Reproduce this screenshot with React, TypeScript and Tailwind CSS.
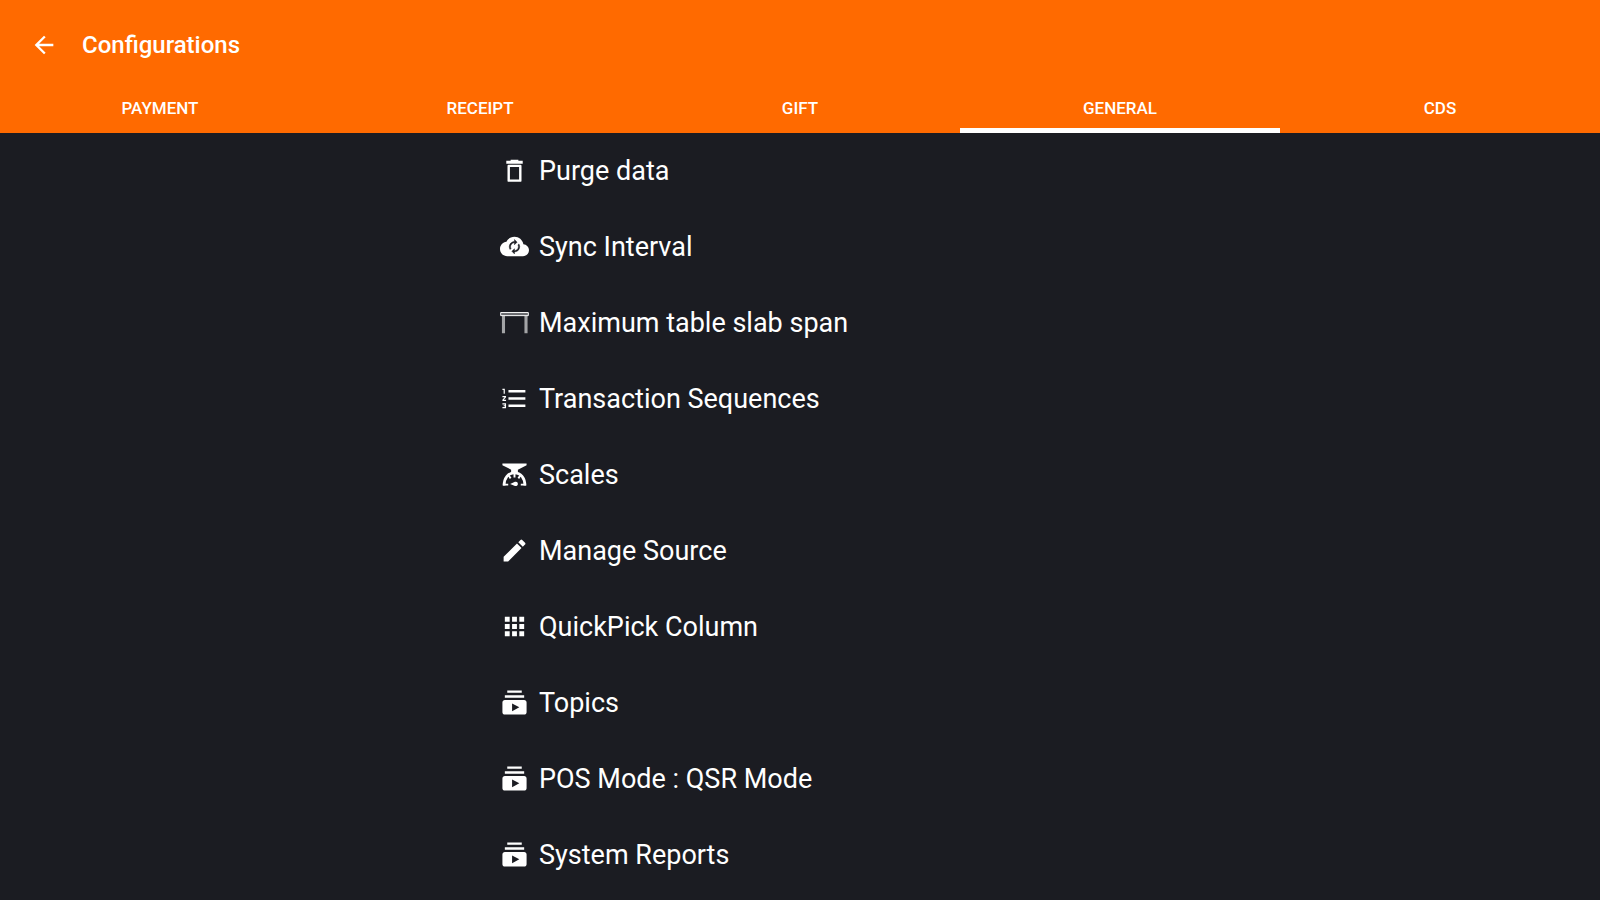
import { useState } from 'react'
import type { ComponentType } from 'react'
import {
  MdApps,
  MdArrowBack,
  MdEdit,
  MdFormatListNumbered,
  MdSubscriptions,
} from 'react-icons/md'
import { clsx } from 'clsx'

type IconProps = { className?: string }

const TABS = ['Payment', 'Receipt', 'Gift', 'General', 'CDS']

function TrashIcon({ className }: IconProps) {
  return (
    <svg viewBox="0 0 30 30" className={className} aria-hidden="true">
      <path fill="currentColor" d="M11 4h8v1h4.5v3h-17V5H11z" />
      <path
        fill="none"
        stroke="currentColor"
        strokeWidth="2.5"
        strokeLinejoin="round"
        d="M9 10.2h12v15.3H9z"
      />
    </svg>
  )
}

function CloudSyncIcon({ className }: IconProps) {
  return (
    <svg viewBox="0 0 24 24" className={className} aria-hidden="true">
      <path
        fill="currentColor"
        d="M19.35 10.04C18.67 6.59 15.64 4 12 4 9.11 4 6.6 5.64 5.35 8.04 2.34 8.36 0 10.91 0 14c0 3.31 2.69 6 6 6h13c2.76 0 5-2.24 5-5 0-2.64-2.05-4.78-4.65-4.96z"
      />
      <path
        fill="#1b1c22"
        stroke="#1b1c22"
        strokeWidth="0.7"
        transform="translate(5.5 5.7) scale(0.54)"
        d="M12 6v3l4-4-4-4v3c-4.42 0-8 3.58-8 8 0 1.57.46 3.03 1.24 4.26L6.7 14.8c-.45-.83-.7-1.79-.7-2.8 0-3.31 2.69-6 6-6zm6.76 1.74L17.3 9.2c.44.84.7 1.79.7 2.8 0 3.31-2.69 6-6 6v-3l-4 4 4 4v-3c4.42 0 8-3.58 8-8 0-1.57-.46-3.03-1.24-4.26z"
      />
    </svg>
  )
}

function TableIcon({ className }: IconProps) {
  return (
    <svg viewBox="0 0 30 30" className={className} aria-hidden="true">
      <path
        fill="currentColor"
        fillOpacity="0.6"
        d="M2 8h3.2v18H2zM25.3 8h3.2v18h-3.2z"
      />
      <path
        fill="currentColor"
        fillOpacity="0.35"
        stroke="currentColor"
        d="M.7 4.7h28.6v3.2H.7z"
      />
    </svg>
  )
}

function ScaleIcon({ className }: IconProps) {
  return (
    <svg viewBox="0 0 30 30" className={className} aria-hidden="true">
      <path fill="currentColor" d="M2.5 3.5h25v2l-9 4.5v3h-7v-3l-9-4.5z" />
      <path
        fill="none"
        stroke="currentColor"
        strokeWidth="2.8"
        d="M4.2 26.5C4.2 18.5 8.5 13.3 15 13.3s10.8 5.2 10.8 13.2"
      />
      <path
        stroke="currentColor"
        strokeWidth="2"
        d="M15 13v5M9 16l2 3M21 16l-2 3M3 25.5h5.5M21.5 25.5H27"
      />
      <path fill="currentColor" d="M10.5 24.7l5-2.2a2.3 2.3 0 1 1 0 4.4z" />
    </svg>
  )
}

const ITEMS: { label: string; icon: ComponentType<IconProps> }[] = [
  { label: 'Purge data', icon: TrashIcon },
  { label: 'Sync Interval', icon: CloudSyncIcon },
  { label: 'Maximum table slab span', icon: TableIcon },
  { label: 'Transaction Sequences', icon: MdFormatListNumbered },
  { label: 'Scales', icon: ScaleIcon },
  { label: 'Manage Source', icon: MdEdit },
  { label: 'QuickPick Column', icon: MdApps },
  { label: 'Topics', icon: MdSubscriptions },
  { label: 'POS Mode : QSR Mode', icon: MdSubscriptions },
  { label: 'System Reports', icon: MdSubscriptions },
]

export default function App() {
  const [activeTab, setActiveTab] = useState('General')

  return (
    <div className="min-h-screen bg-[#1b1c22] font-[Roboto,sans-serif] text-white">
      <header className="bg-[#ff6a00]">
        <div className="flex h-[90px] items-center gap-6 px-[30px]">
          <button type="button" aria-label="Back">
            <MdArrowBack className="size-7" />
          </button>
          <h1 className="text-2xl font-medium">Configurations</h1>
        </div>
        <nav className="grid grid-cols-5">
          {TABS.map((tab) => (
            <button
              key={tab}
              type="button"
              onClick={() => setActiveTab(tab)}
              className={clsx(
                'h-[43px] border-b-5 text-[17px] font-medium uppercase',
                tab === activeTab ? 'border-white' : 'border-transparent',
              )}
            >
              {tab}
            </button>
          ))}
        </nav>
      </header>

      <main className="mx-auto w-3/8">
        <ul>
          {ITEMS.map(({ label, icon: Icon }) => (
            <li key={label}>
              <button
                type="button"
                className="flex h-19 w-full items-center gap-2.5 pb-0.5 text-left text-[27px]"
              >
                <Icon className="size-[29px] shrink-0" />
                <span className="pt-0.5">{label}</span>
              </button>
            </li>
          ))}
        </ul>
      </main>
    </div>
  )
}
